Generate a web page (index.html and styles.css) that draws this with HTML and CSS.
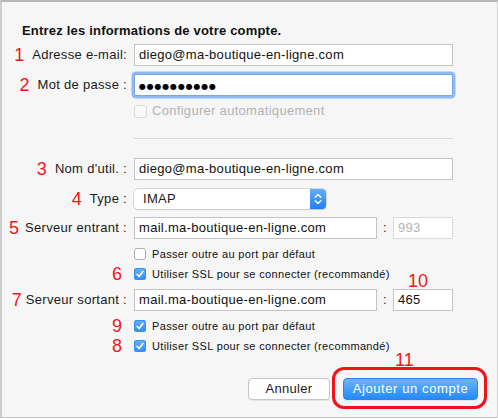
FILE: index.html
```html
<!DOCTYPE html>
<html lang="fr">
<head>
<meta charset="utf-8">
<title>Compte</title>
<link rel="stylesheet" href="styles.css">
</head>
<body>
<div class="window">
  <h1 class="title">Entrez les informations de votre compte.</h1>

  <div class="row r1">
    <div class="label"><span class="mark">1</span>Adresse e-mail:</div>
    <div class="field">diego@ma-boutique-en-ligne.com</div>
  </div>

  <div class="row r2">
    <div class="label"><span class="mark">2</span>Mot de passe :</div>
    <div class="field focus"><span class="dots">●●●●●●●●●●</span></div>
  </div>

  <div class="row check r3">
    <div class="label"></div>
    <span class="box disabled"></span>
    <span class="ctext muted">Configurer automatiquement</span>
  </div>

  <div class="sep"></div>

  <div class="row r5">
    <div class="label"><span class="mark">3</span>Nom d'util. :</div>
    <div class="field">diego@ma-boutique-en-ligne.com</div>
  </div>

  <div class="row sel r6">
    <div class="label"><span class="mark">4</span>Type :</div>
    <div class="select">
      <span class="select-value">IMAP</span>
      <span class="stepper">
        <svg width="16" height="20" viewBox="0 0 16 20"><path d="M5.2 8.2 L8 5.4 L10.8 8.2 M5.2 11.8 L8 14.6 L10.8 11.8" fill="none" stroke="#fff" stroke-width="1.4" stroke-linecap="round" stroke-linejoin="round"/></svg>
      </span>
    </div>
  </div>

  <div class="row r7">
    <div class="label"><span class="mark tight">5</span>Serveur entrant :</div>
    <div class="field short">mail.ma-boutique-en-ligne.com</div>
    <span class="colon">:</span>
    <div class="field port disabled">993</div>
  </div>

  <div class="row check small r8">
    <div class="label"></div>
    <span class="box"></span>
    <span class="ctext">Passer outre au port par défaut</span>
  </div>

  <div class="row check small r9">
    <div class="label"><span class="mark">6</span></div>
    <span class="box checked"><svg width="12" height="12" viewBox="0 0 12 12"><path d="M3 6.3 L5.1 8.4 L8.9 3.5" fill="none" stroke="#fff" stroke-width="1.6" stroke-linecap="round" stroke-linejoin="round"/></svg></span>
    <span class="ctext">Utiliser SSL pour se connecter (recommandé)</span>
  </div>

  <div class="row r10">
    <div class="label"><span class="mark tighter">7</span>Serveur sortant :</div>
    <div class="field short">mail.ma-boutique-en-ligne.com</div>
    <span class="colon">:</span>
    <div class="field port">465</div>
  </div>

  <div class="row check small r11">
    <div class="label"><span class="mark">9</span></div>
    <span class="box checked"><svg width="12" height="12" viewBox="0 0 12 12"><path d="M3 6.3 L5.1 8.4 L8.9 3.5" fill="none" stroke="#fff" stroke-width="1.6" stroke-linecap="round" stroke-linejoin="round"/></svg></span>
    <span class="ctext">Passer outre au port par défaut</span>
  </div>

  <div class="row check small r12">
    <div class="label"><span class="mark">8</span></div>
    <span class="box checked"><svg width="12" height="12" viewBox="0 0 12 12"><path d="M3 6.3 L5.1 8.4 L8.9 3.5" fill="none" stroke="#fff" stroke-width="1.6" stroke-linecap="round" stroke-linejoin="round"/></svg></span>
    <span class="ctext">Utiliser SSL pour se connecter (recommandé)</span>
  </div>

  <div class="actions">
    <button class="btn">Annuler</button>
    <button class="btn primary">Ajouter un compte</button>
  </div>

  <span class="mark note n10">10</span>
  <span class="mark note n11">11</span>
  <span class="highlight"></span>
</div>
</body>
</html>
```

FILE: styles.css
```css
* { box-sizing: border-box; }

html, body {
  margin: 0;
  padding: 0;
  background: #ffffff;
}

body {
  font-family: "Liberation Sans", Arial, Helvetica, sans-serif;
  font-size: 13px;
  line-height: 16px;
  color: #1a1a1a;
  letter-spacing: 0.3px;
}

.window {
  position: relative;
  width: 498px;
  height: 418px;
  background: #f6f6f6;
  border-top: 2px solid #b7b7b7;
  border-left: 2px solid #cdcdcd;
  border-right: 1px solid #d6d6d6;
  border-bottom: 1px solid #c4c4c4;
  padding-top: 21px;
}

.title {
  margin: 0 0 0 20px;
  font-size: 13px;
  line-height: 16px;
  font-weight: bold;
  letter-spacing: 0.2px;
  color: #111;
}

.row {
  display: flex;
  align-items: center;
  height: 22px;
  margin-top: 8px;
}

.row.check { height: 14px; }

.r1 { margin-top: 5px; }
.r3 { margin-top: 8px; }
.r5 { margin-top: 19px; }
.sel { margin-top: 9px; height: 20px; }
.r9, .r12 { margin-top: 6px; }

.label {
  width: 125px;
  margin-right: 7px;
  display: flex;
  justify-content: flex-end;
  align-items: center;
  white-space: nowrap;
  color: #1a1a1a;
}

.mark {
  color: #f0161c;
  font-size: 18px;
  line-height: 16px;
  letter-spacing: 0;
  margin-right: 8px;
}

.mark.tight { margin-right: 6px; }
.mark.tighter { margin-right: 4px; }
.small .mark { margin-right: 5px; }

.field {
  width: 319px;
  height: 22px;
  background: #fff;
  border: 1px solid #c3c3c3;
  padding: 0 4px;
  line-height: 20px;
  white-space: nowrap;
  overflow: hidden;
  color: #111;
}

.field.focus {
  border-color: #7aa6e6;
  border-radius: 2px;
  box-shadow: 0 0 0 2.5px #8fbaf3;
}

.dots {
  font-family: "DejaVu Sans", sans-serif;
  font-size: 8px;
  letter-spacing: 0.8px;
  color: #000;
}

.field.short { width: 243px; }

.colon {
  width: 16px;
  text-align: center;
  color: #1a1a1a;
}

.field.port { width: 60px; }
.field.port.disabled {
  color: #b4b4b4;
  border-color: #d9d9d9;
}

.sep {
  margin: 20px 0 0 132px;
  width: 319px;
  height: 1px;
  background: #dadada;
}

.box {
  width: 13px;
  height: 13px;
  border: 1px solid #b2b2b2;
  border-radius: 3px;
  background: #fff;
  margin-right: 5px;
  display: flex;
  flex: none;
}

.small .box {
  width: 12px;
  height: 12px;
  margin-right: 6px;
}

.box.disabled {
  border-color: #d8d8d8;
  background: #f9f9f9;
}

.box.checked {
  border: none;
  background: linear-gradient(#69b1fc, #2f8bf6);
  box-shadow: inset 0 0 0 1px #3a8ff0;
}

.ctext { white-space: nowrap; }
.ctext.muted { color: #b3b3b3; }
.small .ctext {
  font-size: 11px;
  letter-spacing: 0.35px;
  color: #111;
}

.select {
  width: 192px;
  height: 20px;
  display: flex;
  align-items: center;
  background: #fff;
  border-radius: 4px;
  box-shadow: 0 0 0 0.5px #b9b9b9, 0 1px 1px rgba(0,0,0,0.12);
}

.select-value {
  flex: 1;
  padding-left: 9px;
}

.stepper {
  width: 16px;
  height: 20px;
  border-radius: 0 4px 4px 0;
  background: linear-gradient(#63aefc, #1f7ff4);
  display: flex;
}

.actions {
  display: flex;
  justify-content: flex-end;
  gap: 13px;
  padding-right: 19px;
  margin-top: 25px;
}

.btn {
  font: inherit;
  letter-spacing: 0.3px;
  height: 22px;
  border-radius: 4px;
  background: #fff;
  border: 1px solid #c6c6c6;
  box-shadow: 0 1px 0 rgba(0,0,0,0.06);
  color: #1a1a1a;
  padding: 0;
  width: 82px;
}

.btn.primary {
  width: 135px;
  color: #fff;
  letter-spacing: 0.6px;
  border: 1px solid #2a85f2;
  background: linear-gradient(#6cb5fc, #238af7);
}

.note {
  position: absolute;
  line-height: 18px;
  margin: 0;
}

.n10 { left: 406px; top: 270px; }
.n11 { left: 393px; top: 349px; }

.highlight {
  position: absolute;
  left: 330px;
  top: 365px;
  width: 155px;
  height: 42px;
  border: 3px solid #f2121a;
  border-radius: 12px;
}
```
